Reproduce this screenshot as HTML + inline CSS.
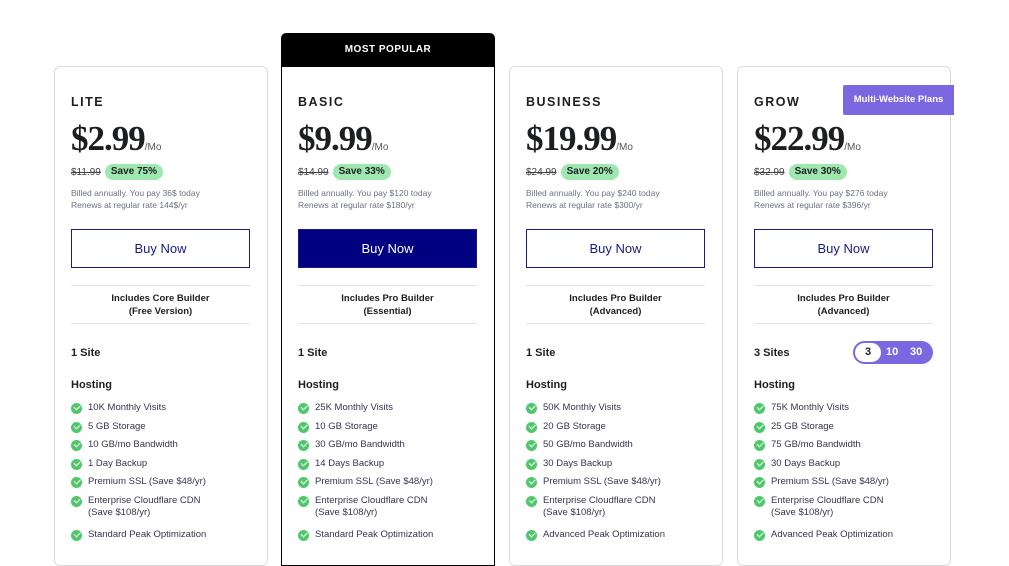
<!DOCTYPE html>
<html><head><meta charset="utf-8"><style>
*{box-sizing:border-box;margin:0;padding:0}
body{width:1009px;height:546px;overflow:hidden;background:#fff;font-family:"Liberation Sans",sans-serif;color:#1d1e20;position:relative}
.card{position:absolute;top:66px;width:214px;height:500px;border:1px solid #dadce0;border-radius:6px;background:#fff}
.pop{border:1px solid #000;border-radius:0}
.hdr{position:absolute;top:33px;left:281px;width:214px;height:34px;background:#000;color:#fff;font-size:10px;font-weight:bold;letter-spacing:.5px;text-align:center;line-height:34px;border-radius:5px 5px 0 0}
.in{position:absolute;left:16px;right:16px;top:0}
.name{position:absolute;top:28px;font-size:12.5px;font-weight:bold;letter-spacing:1.5px}
.price{position:absolute;top:52px;font-family:"Liberation Serif",serif;font-weight:bold;font-size:35px;letter-spacing:-1px;white-space:nowrap}
.price small{font-family:"Liberation Sans",sans-serif;font-size:10px;font-weight:normal;color:#555;letter-spacing:0}
.row{position:absolute;top:97px;left:0;display:flex;align-items:center;gap:4px;white-space:nowrap}
.old{font-size:10px;color:#444;text-decoration:line-through}
.save{background:#9ee8b0;border-radius:9px;font-size:10px;font-weight:bold;padding:2px 6px;line-height:12px}
.bill{position:absolute;top:120px;font-size:8.5px;color:#6d7081;line-height:12px;white-space:nowrap}
.btn{position:absolute;top:162px;left:0;width:179px;height:39px;border:1px solid #1a1a80;color:#1a1a80;font-size:13px;text-align:center;line-height:37px}
.btn.f{background:#000080;color:#fff}
.inc{position:absolute;top:218px;left:0;width:179px;height:39px;border-top:1px solid #e3e3e3;border-bottom:1px solid #e3e3e3;text-align:center;font-size:9.5px;font-weight:bold;line-height:13px;padding-top:6px}
.sites{position:absolute;top:280px;font-size:11px;font-weight:bold}
.host{position:absolute;top:312px;font-size:11px;font-weight:bold}
ul{position:absolute;top:335px;left:0;list-style:none;font-size:9.5px;color:#36344d}
li{position:relative;padding-left:17px;height:18.5px;line-height:12px}
li.two{height:34px}
li:before{content:"";position:absolute;left:0;top:1px;width:11px;height:11px;border-radius:50%;background:#4fc76b}
li:after{content:"";position:absolute;left:3px;top:3px;width:5px;height:2.5px;border-left:1.5px solid #fff;border-bottom:1.5px solid #fff;transform:rotate(-45deg)}
.tag{position:absolute;left:843px;top:85px;width:111px;height:30px;background:#7b68e0;color:#fff;font-size:9.5px;font-weight:bold;text-align:center;line-height:30px;border-radius:2px 0 0 2px}
.tog{position:absolute;left:853px;top:341px;width:80px;height:23px;border-radius:12px;background:#7b68e0;font-size:11px;font-weight:bold;color:#fff}
.tog span{position:absolute;top:5px}
.tog .a{left:2px;top:2px;width:26px;height:19px;background:#fff;color:#1d1e20;border-radius:10px;text-align:center;line-height:19px}
</style></head><body>
<div class="hdr">MOST POPULAR</div>

<div class="card" style="left:54px"><div class="in">
<div class="name">LITE</div><div class="price">$2.99<small>/Mo</small></div>
<div class="row"><span class="old">$11.99</span><span class="save">Save 75%</span></div>
<div class="bill">Billed annually. You pay 36$ today<br>Renews at regular rate 144$/yr</div>
<div class="btn">Buy Now</div><div class="inc">Includes Core Builder<br>(Free Version)</div>
<div class="sites">1 Site</div><div class="host">Hosting</div>
<ul><li>10K Monthly Visits</li><li>5 GB Storage</li><li>10 GB/mo Bandwidth</li><li>1 Day Backup</li><li>Premium SSL (Save $48/yr)</li><li class="two">Enterprise Cloudflare CDN<br>(Save $108/yr)</li><li>Standard Peak Optimization</li></ul>
</div></div>

<div class="card pop" style="left:281px;width:214px"><div class="in">
<div class="name">BASIC</div><div class="price">$9.99<small>/Mo</small></div>
<div class="row"><span class="old">$14.99</span><span class="save">Save 33%</span></div>
<div class="bill">Billed annually. You pay $120 today<br>Renews at regular rate $180/yr</div>
<div class="btn f">Buy Now</div><div class="inc">Includes Pro Builder<br>(Essential)</div>
<div class="sites">1 Site</div><div class="host">Hosting</div>
<ul><li>25K Monthly Visits</li><li>10 GB Storage</li><li>30 GB/mo Bandwidth</li><li>14 Days Backup</li><li>Premium SSL (Save $48/yr)</li><li class="two">Enterprise Cloudflare CDN<br>(Save $108/yr)</li><li>Standard Peak Optimization</li></ul>
</div></div>

<div class="card" style="left:509px"><div class="in">
<div class="name">BUSINESS</div><div class="price">$19.99<small>/Mo</small></div>
<div class="row"><span class="old">$24.99</span><span class="save">Save 20%</span></div>
<div class="bill">Billed annually. You pay $240 today<br>Renews at regular rate $300/yr</div>
<div class="btn">Buy Now</div><div class="inc">Includes Pro Builder<br>(Advanced)</div>
<div class="sites">1 Site</div><div class="host">Hosting</div>
<ul><li>50K Monthly Visits</li><li>20 GB Storage</li><li>50 GB/mo Bandwidth</li><li>30 Days Backup</li><li>Premium SSL (Save $48/yr)</li><li class="two">Enterprise Cloudflare CDN<br>(Save $108/yr)</li><li>Advanced Peak Optimization</li></ul>
</div></div>

<div class="card" style="left:737px"><div class="in">
<div class="name">GROW</div><div class="price">$22.99<small>/Mo</small></div>
<div class="row"><span class="old">$32.99</span><span class="save">Save 30%</span></div>
<div class="bill">Billed annually. You pay $276 today<br>Renews at regular rate $396/yr</div>
<div class="btn">Buy Now</div><div class="inc">Includes Pro Builder<br>(Advanced)</div>
<div class="sites">3 Sites</div><div class="host">Hosting</div>
<ul><li>75K Monthly Visits</li><li>25 GB Storage</li><li>75 GB/mo Bandwidth</li><li>30 Days Backup</li><li>Premium SSL (Save $48/yr)</li><li class="two">Enterprise Cloudflare CDN<br>(Save $108/yr)</li><li>Advanced Peak Optimization</li></ul>
</div></div>

<div class="tag">Multi-Website Plans</div>
<div class="tog"><span class="a">3</span><span style="left:33px">10</span><span style="left:57px">30</span></div>
</body></html>
